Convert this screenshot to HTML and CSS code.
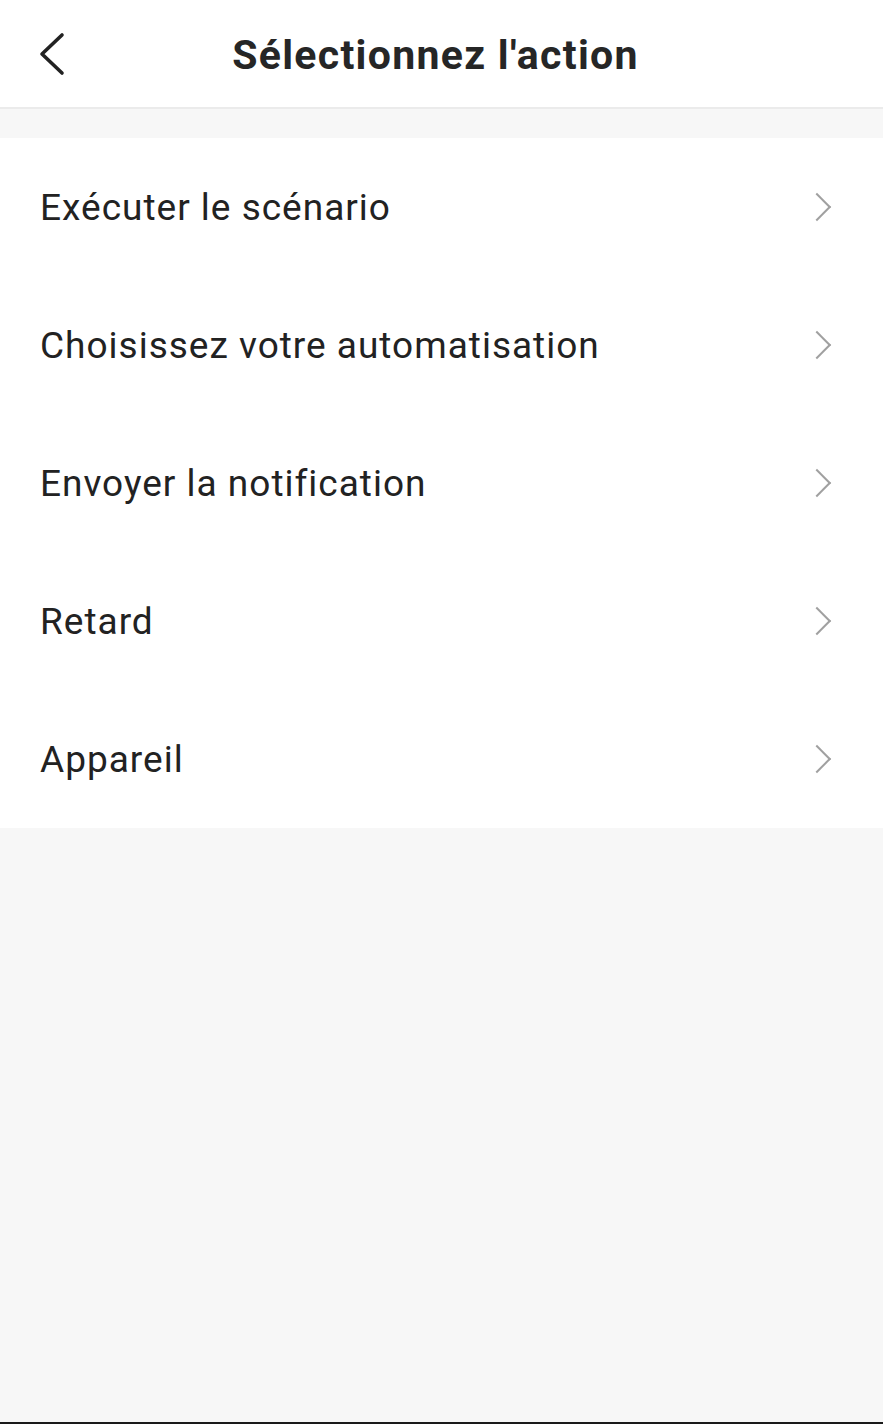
FILE: index.html
```html
<!DOCTYPE html>
<html lang="fr">
<head>
    <meta charset="UTF-8">
    <meta name="viewport" content="width=device-width, initial-scale=1.0">
    <title>Sélectionnez l'action</title>
    <link rel="stylesheet" href="styles.css">
</head>
<body>
    <div class="screen">
        <header class="topbar">
            <a href="#" class="back" aria-label="Retour">
                <svg width="30" height="44" viewBox="0 0 30 44">
                    <polyline points="24,3 4,22 24,41" fill="none" stroke="#222" stroke-width="3.6" stroke-linecap="round" stroke-linejoin="round"/>
                </svg>
            </a>
            <h1>Sélectionnez l'action</h1>
        </header>

        <!-- Liste des actions -->
        <ul class="actions">
            <li class="action"><span>Exécuter le scénario</span><i class="chevron"></i></li>
            <li class="action"><span>Choisissez votre automatisation</span><i class="chevron"></i></li>
            <li class="action"><span>Envoyer la notification</span><i class="chevron"></i></li>
            <li class="action"><span>Retard</span><i class="chevron"></i></li>
            <li class="action"><span>Appareil</span><i class="chevron"></i></li>
        </ul>

        <div class="filler"></div>
    </div>
</body>
</html>
```

FILE: styles.css
```css
body {
    font-family: 'Roboto', 'Noto Sans', sans-serif;
    margin: 0;
    padding: 0;
    background-color: #f7f7f7;
    color: #222;
}

.screen {
    display: flex;
    flex-direction: column;
    min-height: 100vh;
}

/* Barre du haut */
.topbar {
    height: 109px;
    background-color: #fff;
    border-bottom: 2px solid #ebebeb;
    display: flex;
    align-items: center;
    justify-content: center;
    padding: 2px 12px 0 0;
    box-sizing: border-box;
    position: relative;
}

.back {
    position: absolute;
    left: 38px;
    top: 32px;
    display: block;
    line-height: 0;
}

h1 {
    margin: 0;
    font-size: 41px;
    font-weight: 700;
    color: #262626;
    letter-spacing: 1.3px;
}

/* Liste */
.actions {
    list-style: none;
    margin: 29px 0 0 0;
    padding: 0;
    background-color: #fff;
}

.action {
    height: 138px;
    display: flex;
    align-items: center;
    justify-content: space-between;
    padding: 0 56px 0 40px;
    font-size: 37px;
    letter-spacing: 1px;
    color: #222;
    cursor: pointer;
}

.chevron {
    width: 18px;
    height: 18px;
    border-top: 2.5px solid #a0a0a0;
    border-right: 2.5px solid #a0a0a0;
    transform: rotate(45deg);
}

.filler {
    flex: 1;
    border-bottom: 2px solid #1a1a1a;
}
```
